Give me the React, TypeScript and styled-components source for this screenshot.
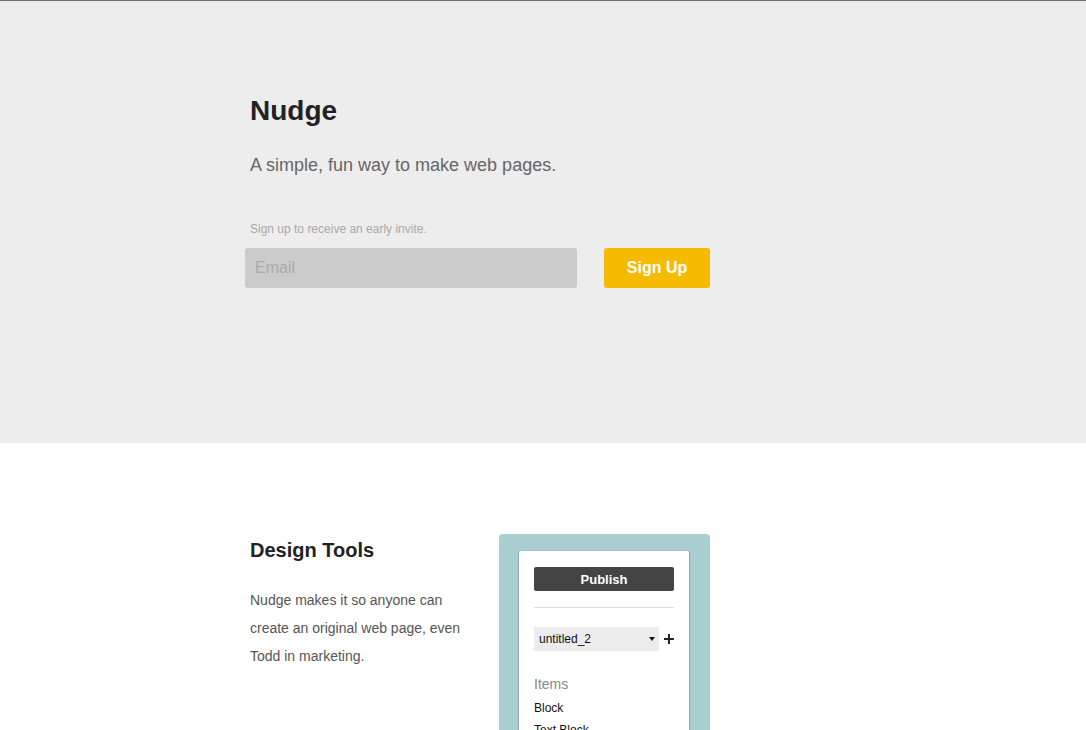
import React from "react";
import styled, { createGlobalStyle } from "styled-components";

const Global = createGlobalStyle`
  html, body { margin: 0; padding: 0; background: #fff; }
  body { font-family: "Liberation Sans", Arial, Helvetica, sans-serif; }
  * { box-sizing: border-box; }
`;

const Hero = styled.header`
  background: #ededed;
  border-top: 1px solid #6e6e6e;
  padding: 94px 0 155px;
`;

const Container = styled.div`
  width: 586px;
  margin: 0 auto;
`;

const Title = styled.h1`
  margin: 0;
  font-size: 28px;
  line-height: 32px;
  font-weight: bold;
  color: #222;
`;

const Tagline = styled.p`
  margin: 27px 0 0;
  font-size: 18px;
  line-height: 22px;
  color: #666;
`;

const Note = styled.p`
  margin: 46px 0 0;
  font-size: 12px;
  line-height: 14px;
  color: #a9a9a9;
`;

const Form = styled.form`
  display: flex;
  gap: 27px;
  margin: 12px 0 0 -5px;
`;

const EmailInput = styled.input`
  width: 332px;
  height: 40px;
  border: none;
  border-radius: 3px;
  background: #cbcbcb;
  padding: 0 10px;
  font-family: inherit;
  font-size: 16px;
  color: #555;
  outline: none;
  &::placeholder { color: #aaa; }
`;

const SignUp = styled.button`
  width: 106px;
  height: 40px;
  border: none;
  border-radius: 3px;
  background: #f6ba00;
  color: #fff;
  font-family: inherit;
  font-weight: bold;
  font-size: 16px;
  cursor: pointer;
`;

const Features = styled.section`
  padding: 91px 0 40px;
`;

const FeatureRow = styled.div`
  display: grid;
  grid-template-columns: 249px 211px;
`;

const FeatureText = styled.div`
  padding-top: 4px;
`;

const FeatureTitle = styled.h2`
  margin: 0;
  font-size: 20px;
  line-height: 24px;
  font-weight: bold;
  color: #222;
`;

const FeatureBody = styled.p`
  margin: 24px 0 0;
  width: 222px;
  font-size: 14px;
  line-height: 28px;
  color: #555;
`;

const Panel = styled.div`
  background: #a9cfd0;
  border-radius: 4px 4px 0 0;
  padding: 17px 21px 30px 20px;
`;

const Card = styled.div`
  background: #fff;
  border-radius: 2px;
  box-shadow: -1px 0 1px rgba(0, 0, 0, 0.18), 1px 0 1px rgba(0, 0, 0, 0.18);
  padding: 16px 15px 20px;
`;

const Publish = styled.button`
  display: block;
  width: 140px;
  height: 24px;
  border: none;
  border-radius: 2px;
  background: #444;
  color: #fff;
  font-family: inherit;
  font-weight: bold;
  font-size: 13px;
`;

const Divider = styled.hr`
  margin: 16px 0 19px;
  border: none;
  border-top: 1px solid #ddd;
  width: 140px;
`;

const PageRow = styled.div`
  display: flex;
  align-items: center;
  gap: 4px;
`;

const PageSelect = styled.div`
  width: 126px;
  height: 24px;
  background: #ececec;
  display: flex;
  align-items: center;
  justify-content: space-between;
  padding: 0 4px 0 5px;
  font-size: 12px;
  color: #111;
`;

const Caret = styled.span`
  width: 0;
  height: 0;
  border-left: 3.5px solid transparent;
  border-right: 3.5px solid transparent;
  border-top: 4px solid #111;
`;

const Plus = styled.svg`
  width: 10px;
  height: 10px;
  margin-left: 1px;
`;

const ItemsLabel = styled.div`
  margin-top: 24px;
  font-size: 14px;
  line-height: 18px;
  color: #888;
`;

const ItemList = styled.ul`
  list-style: none;
  margin: 4px 0 0;
  padding: 0;
`;

const Item = styled.li`
  font-size: 12px;
  line-height: 22px;
  color: #111;
`;

export default function App() {
  return (
    <>
      <Global />
      <Hero>
        <Container>
          <Title>Nudge</Title>
          <Tagline>A simple, fun way to make web pages.</Tagline>
          <Note>Sign up to receive an early invite.</Note>
          <Form onSubmit={(e) => e.preventDefault()}>
            <EmailInput type="email" placeholder="Email" />
            <SignUp type="submit">Sign Up</SignUp>
          </Form>
        </Container>
      </Hero>
      <Features>
        <Container>
          <FeatureRow>
            <FeatureText>
              <FeatureTitle>Design Tools</FeatureTitle>
              <FeatureBody>
                Nudge makes it so anyone can create an original web page, even Todd in marketing.
              </FeatureBody>
            </FeatureText>
            <Panel>
              <Card>
                <Publish type="button">Publish</Publish>
                <Divider />
                <PageRow>
                  <PageSelect>
                    <span>untitled_2</span>
                    <Caret />
                  </PageSelect>
                  <Plus viewBox="0 0 10 10">
                    <path d="M5 0v10M0 5h10" stroke="#222" strokeWidth="2" />
                  </Plus>
                </PageRow>
                <ItemsLabel>Items</ItemsLabel>
                <ItemList>
                  <Item>Block</Item>
                  <Item>Text Block</Item>
                  <Item>Image</Item>
                  <Item>Button</Item>
                </ItemList>
              </Card>
            </Panel>
          </FeatureRow>
        </Container>
      </Features>
    </>
  );
}
